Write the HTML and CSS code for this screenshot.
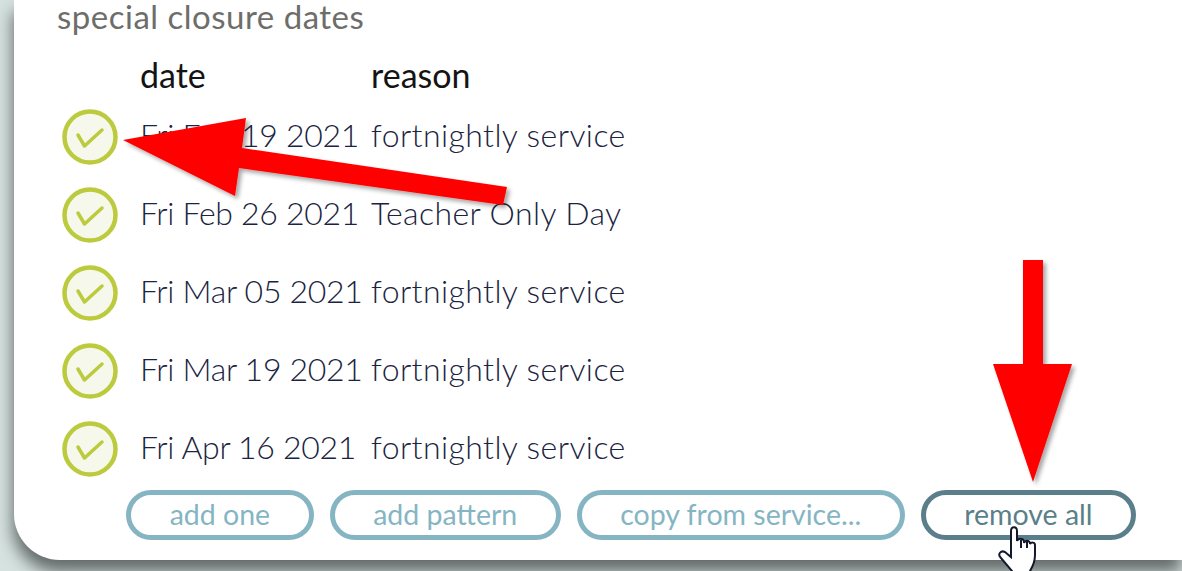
FILE: index.html
```html
<!DOCTYPE html>
<html lang="en">
<head>
  <meta charset="UTF-8">
  <title>special closure dates</title>
  <link rel="stylesheet" href="styles.css">
</head>
<body>
  <main class="card">
    <h2 class="card-title">special closure dates</h2>
    <div class="dates">
      <div class="dates-head"></div>
      <div class="dates-head">date</div>
      <div class="dates-head">reason</div>

      <svg class="tick" viewBox="0 0 56 56"><circle cx="28" cy="28" r="25.5"/><path d="M16 26l6.5 11L40 21"/></svg>
      <div class="date-cell">Fri Feb 19 2021</div>
      <div class="reason-cell">fortnightly service</div>

      <svg class="tick" viewBox="0 0 56 56"><circle cx="28" cy="28" r="25.5"/><path d="M16 26l6.5 11L40 21"/></svg>
      <div class="date-cell">Fri Feb 26 2021</div>
      <div class="reason-cell">Teacher Only Day</div>

      <svg class="tick" viewBox="0 0 56 56"><circle cx="28" cy="28" r="25.5"/><path d="M16 26l6.5 11L40 21"/></svg>
      <div class="date-cell">Fri Mar 05 2021</div>
      <div class="reason-cell">fortnightly service</div>

      <svg class="tick" viewBox="0 0 56 56"><circle cx="28" cy="28" r="25.5"/><path d="M16 26l6.5 11L40 21"/></svg>
      <div class="date-cell">Fri Mar 19 2021</div>
      <div class="reason-cell">fortnightly service</div>

      <svg class="tick" viewBox="0 0 56 56"><circle cx="28" cy="28" r="25.5"/><path d="M16 26l6.5 11L40 21"/></svg>
      <div class="date-cell">Fri Apr 16 2021</div>
      <div class="reason-cell">fortnightly service</div>
    </div>
    <div class="actions">
      <button class="btn">add one</button>
      <button class="btn">add pattern</button>
      <button class="btn">copy from service...</button>
      <button class="btn btn-hover">remove all</button>
    </div>
  </main>

  <!-- red arrows and pointer drawn over the screenshot -->
  <svg class="overlay" width="1182" height="571" viewBox="0 0 1182 571">
    <defs>
      <filter id="arrowShadow" x="-10%" y="-10%" width="125%" height="125%">
        <feDropShadow dx="3" dy="3" stdDeviation="2" flood-color="#000" flood-opacity="0.35"/>
      </filter>
    </defs>
    <path class="arrow" d="M123 140L246 118 242 148 507 187 503 205 239 168 235 196Z"/>
    <path class="arrow" d="M1023 260H1043V364H1072L1033 482 993 364H1023Z"/>
    <path class="hand" d="M1011 531c0-5 6-5 6 0v10c1-3 6-3 7 0v2c1-3 5-3 6 0v1c1-2 5-2 5 1v10c0 6-2 11-5 16v4h-16l-2-4-11-13c-4-4 0-8 4-6l6 5z"/>
    <path class="hand-lines" d="M1021 540v8M1027 541v7"/>
  </svg>
</body>
</html>
```

FILE: styles.css
```css
* {
  margin: 0;
  padding: 0;
  box-sizing: border-box;
}

html, body {
  height: 571px;
  overflow: hidden;
}

body {
  font-family: "Lato", "Open Sans", sans-serif;
  background: #d6e2df;
  position: relative;
}

.card {
  margin-left: 14px;
  height: 560px;
  background-color: #ffffff;
  border-bottom-left-radius: 46px;
  box-shadow: -1px 12px 16px rgba(50, 55, 55, 0.7);
  padding: 0 46px 0 43px;
}

.card-title {
  font-size: 33px;
  font-weight: 400;
  letter-spacing: 0.5px;
  line-height: 32px;
  color: #6d6d6a;
}

.dates {
  display: grid;
  grid-template-columns: 78px 231px 1fr;
  grid-template-rows: 66px repeat(5, 78px);
  align-items: center;
  margin-left: 5px;
  font-size: 32px;
  font-weight: 300;
  color: #1a2440;
}

.dates-head {
  align-self: end;
  padding-bottom: 1px;
  font-size: 34px;
  font-weight: 400;
  line-height: 44px;
  color: #141414;
}

.date-cell {
  padding-bottom: 6px;
  letter-spacing: -0.3px;
  white-space: nowrap;
}

.reason-cell {
  padding-bottom: 6px;
  letter-spacing: 0.4px;
  white-space: nowrap;
}

.tick {
  width: 56px;
  height: 56px;
}

.tick circle {
  fill: #f5f8ea;
  stroke: #bccb3e;
  stroke-width: 4.5;
}

.tick path {
  fill: none;
  stroke: #bccb3e;
  stroke-width: 3.5;
  stroke-linecap: round;
  stroke-linejoin: round;
}

.actions {
  display: flex;
  justify-content: flex-end;
  gap: 16px;
  margin-top: 2px;
}

.btn {
  height: 50px;
  padding: 0 38.5px 2px;
  font-family: inherit;
  font-size: 28.5px;
  color: #85b5c3;
  background-color: #ffffff;
  border: 5px solid #85b5c3;
  border-radius: 25px;
}

.btn-hover {
  color: #5a7f8a;
  border-color: #5a7f8a;
}

.overlay {
  position: absolute;
  top: 0;
  left: 0;
}

.arrow {
  fill: #ff0000;
  filter: url(#arrowShadow);
}

.hand {
  fill: #ffffff;
  stroke: #14182a;
  stroke-width: 2;
}

.hand-lines {
  fill: none;
  stroke: #14182a;
  stroke-width: 2;
}
```
